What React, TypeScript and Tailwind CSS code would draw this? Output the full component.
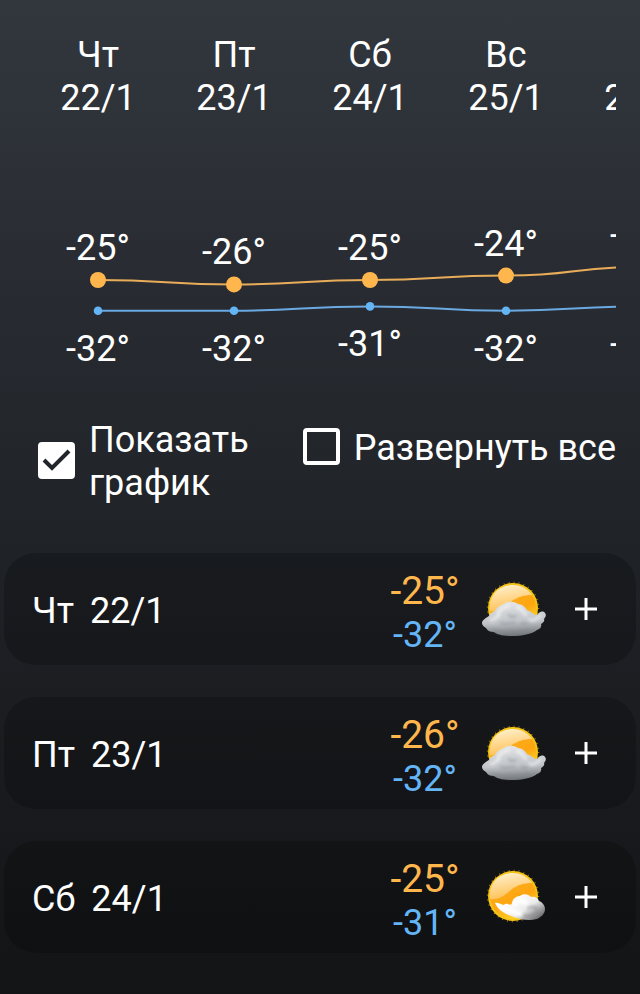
import { useState } from "react";

interface Day {
  name: string;
  date: string;
  high: number;
  low: number;
  icon: "cloudy" | "fair";
}

const days: Day[] = [
  { name: "Чт", date: "22/1", high: -25, low: -32, icon: "cloudy" },
  { name: "Пт", date: "23/1", high: -26, low: -32, icon: "cloudy" },
  { name: "Сб", date: "24/1", high: -25, low: -31, icon: "fair" },
  { name: "Вс", date: "25/1", high: -24, low: -32, icon: "fair" },
  { name: "Пн", date: "26/1", high: -22, low: -31, icon: "fair" },
];

const COLUMN = 136;

// Horizontal centre of a day's column and height of a temperature
const dayX = (i: number) => i * COLUMN + COLUMN / 2;
const tempY = (t: number) => 50 - t * 4.4;

const curve = (temps: number[]) =>
  temps
    .map((t, i) => {
      if (i === 0) return `M${dayX(0)} ${tempY(t)}`;
      const mid = i * COLUMN;
      return `C${mid} ${tempY(temps[i - 1])} ${mid} ${tempY(t)} ${dayX(i)} ${tempY(t)}`;
    })
    .join(" ");

function TemperatureChart() {
  return (
    <svg
      width={COLUMN * days.length}
      height="260"
      className="block shrink-0 fill-white text-[36px]"
      role="img"
      aria-label="График температуры"
    >
      <path d={curve(days.map((d) => d.high))} fill="none" stroke="#e9ac59" strokeWidth="2" />
      <path d={curve(days.map((d) => d.low))} fill="none" stroke="#6aa9e2" strokeWidth="2" />
      {days.map((d, i) => (
        <g key={d.date} textAnchor="middle">
          <text x={dayX(i)} y={tempY(d.high) - 20}>{d.high}°</text>
          <circle cx={dayX(i)} cy={tempY(d.high)} r="8" fill="#ffb74d" />
          <circle cx={dayX(i)} cy={tempY(d.low)} r="4.3" fill="#64b5f6" />
          <text x={dayX(i)} y={tempY(d.low) + 50}>{d.low}°</text>
        </g>
      ))}
    </svg>
  );
}

function WeatherIcon({ type, id }: { type: Day["icon"]; id: string }) {
  return (
    <svg width="70" height="64" viewBox="0 0 70 64" aria-hidden="true">
      <defs>
        <linearGradient id={`sun-${id}`} x1="0.2" y1="0" x2="0.7" y2="1">
          <stop offset="0" stopColor="#ffb52a" />
          <stop offset="0.6" stopColor="#fda510" />
          <stop offset="1" stopColor="#ffdc2e" />
        </linearGradient>
        <linearGradient id={`shine-${id}`} x1="0.3" y1="0" x2="0.6" y2="1">
          <stop offset="0" stopColor="#fff0cc" />
          <stop offset="1" stopColor="#ffbd4a" />
        </linearGradient>
        <linearGradient id={`cloud-${id}`} x1="0.45" y1="0" x2="0.55" y2="1">
          <stop offset="0" stopColor="#e2e4e6" />
          <stop offset="0.6" stopColor="#c0c3c7" />
          <stop offset="1" stopColor="#6c7177" />
        </linearGradient>
        <linearGradient id={`puff-${id}`} x1="0.3" y1="0.2" x2="1" y2="0.7">
          <stop offset="0" stopColor="#ffffff" />
          <stop offset="0.55" stopColor="#ececec" />
          <stop offset="1" stopColor="#77777a" />
        </linearGradient>
        <filter id={`edge-${id}`} x="-20%" y="-20%" width="140%" height="140%">
          <feGaussianBlur stdDeviation="0.6" />
        </filter>
        <filter id={`soft-${id}`} x="-20%" y="-20%" width="140%" height="140%">
          <feGaussianBlur stdDeviation="1.5" />
        </filter>
      </defs>
      <g filter={`url(#edge-${id})`}>
        <circle cx="34" cy="31" r="25.5" fill="none" stroke="#a87c00" strokeWidth="1.5" strokeDasharray="1 4" />
        <circle cx="34" cy="31" r="25" fill="#f5c518" />
      </g>
      <circle cx="34" cy="31" r="23" fill={`url(#sun-${id})`} />
      <path
        d="M11 34C9 19 19 8 34 8c8 0 15 4 19 10-8 0-14 2-20 6-7 6-12 11-22 10z"
        fill={`url(#shine-${id})`}
      />
      {type === "cloudy" ? (
        <g>
          <path
            d="M3 46c0-3 4-5 7-7 1-3 4-4 6-5 2-4 5-6 9-7 3-3 10-3 14 0 4 0 7 3 9 6 3 1 6 3 8 5 2 0 3-1 4-2 2-2 5-2 6 0 2 2 0 5-1 6 1 2-1 4-3 5 1 3-1 5-4 6-5 4-15 6-25 6-8 0-14-1-18-4-4 0-6-1-8-4-2-1-4-3-4-5z"
            fill={`url(#cloud-${id})`}
            filter={`url(#edge-${id})`}
          />
          <g filter={`url(#soft-${id})`} fill="none" strokeLinecap="round">
            <path d="M19 37c2-4 6-7 11-8M38 30c5 2 7 5 9 8M12 43c3 0 5-3 8-4M50 43c4 1 8-1 11-4" stroke="#f6f7f8" strokeWidth="3" opacity=".65" />
            <path d="M30 38c2 2 5 2 7 1M22 46c6 2 9-1 14 0M42 46c3 1 6 0 8-1M14 53c9 4 24 4 36 0" stroke="#82878d" strokeWidth="2.5" opacity=".45" />
          </g>
        </g>
      ) : (
        <g>
          <path
            d="M16 38c3-1 6 2 9 2 3-3 5 1 8-1 0-5 4-8 8-8 3-3 9-2 11 1 4-1 7 1 8 4 3 1 6 4 6 8 0 5-4 8-8 10-7 2-16 1-23-2-9-3-16-7-19-14z"
            fill={`url(#puff-${id})`}
            filter={`url(#edge-${id})`}
          />
          <g filter={`url(#soft-${id})`} fill="none" strokeLinecap="round">
            <path d="M36 39c3-4 8-4 11-1M23 43c6 3 12 3 18 6" stroke="#ffffff" strokeWidth="4" />
            <path d="M49 43c3-2 7-1 9 1M45 51c5 1 10-1 14-4" stroke="#85868a" strokeWidth="3" opacity=".5" />
          </g>
        </g>
      )}
    </svg>
  );
}

interface CheckProps {
  label: string;
  checked: boolean;
  onChange: (value: boolean) => void;
}

function Check({ label, checked, onChange }: CheckProps) {
  return (
    <label className="flex cursor-pointer items-center gap-[14px]">
      <span className="mb-1 grid size-[37px] shrink-0 *:col-start-1 *:row-start-1">
        <input
          type="checkbox"
          checked={checked}
          onChange={(e) => onChange(e.target.checked)}
          className="size-full appearance-none rounded-[4px] border-4 border-white checked:bg-white"
        />
        {checked && (
          <svg viewBox="0 0 37 37" className="pointer-events-none size-full" aria-hidden="true">
            <path d="M6 18l8 8L31 9" fill="none" stroke="#22252a" strokeWidth="4" />
          </svg>
        )}
      </span>
      <span>{label}</span>
    </label>
  );
}

function DayCard({ day, open }: { day: Day; open: boolean }) {
  return (
    <li className="flex h-28 items-center rounded-[32px] bg-black/20 pr-[39px] pl-7">
      <div className="flex flex-1 gap-4 pt-1">
        <span>{day.name}</span>
        <span>{day.date}</span>
      </div>
      <div className="w-20 pt-2 text-center">
        <p className="text-[39px] leading-[45px] text-[#ffb74d]">{day.high}°</p>
        <p className="text-[#64b5f6]">{day.low}°</p>
      </div>
      <div className="ml-[14px]">
        <WeatherIcon type={day.icon} id={day.date.replace("/", "-")} />
      </div>
      <button type="button" className="ml-[26px]" aria-label="Подробнее" aria-expanded={open}>
        <svg width="22" height="22" viewBox="0 0 22 22" stroke="#fff" strokeWidth="3" aria-hidden="true">
          <path d="M0 11h22M11 0v22" />
        </svg>
      </button>
    </li>
  );
}

export default function App() {
  const [showChart, setShowChart] = useState(true);
  const [expandAll, setExpandAll] = useState(false);

  return (
    <main className="min-h-screen bg-linear-to-b from-[#32373e] via-[#212429] to-[#131416] pt-[34px] pb-10 font-['Roboto',sans-serif] text-[36px] leading-[43px] text-white">
      {/* Forecast strip */}
      <section className="mr-6 ml-[30px] overflow-hidden">
        <div className="flex">
          {days.map((d) => (
            <div key={d.date} className="w-[136px] shrink-0 text-center">
              <p>{d.name}</p>
              <p>{d.date}</p>
            </div>
          ))}
        </div>
        {showChart && <TemperatureChart />}
      </section>

      {/* Options */}
      <div className="mt-[39px] mr-6 ml-[38px] flex items-start justify-between">
        <div className="w-[220px]">
          <Check label="Показать график" checked={showChart} onChange={setShowChart} />
        </div>
        <div className="mt-2 whitespace-nowrap">
          <Check label="Развернуть все" checked={expandAll} onChange={setExpandAll} />
        </div>
      </div>

      {/* Days */}
      <ul className="mx-1 mt-12 flex flex-col gap-8">
        {days.slice(0, 3).map((d) => (
          <DayCard key={d.date} day={d} open={expandAll} />
        ))}
      </ul>
    </main>
  );
}
